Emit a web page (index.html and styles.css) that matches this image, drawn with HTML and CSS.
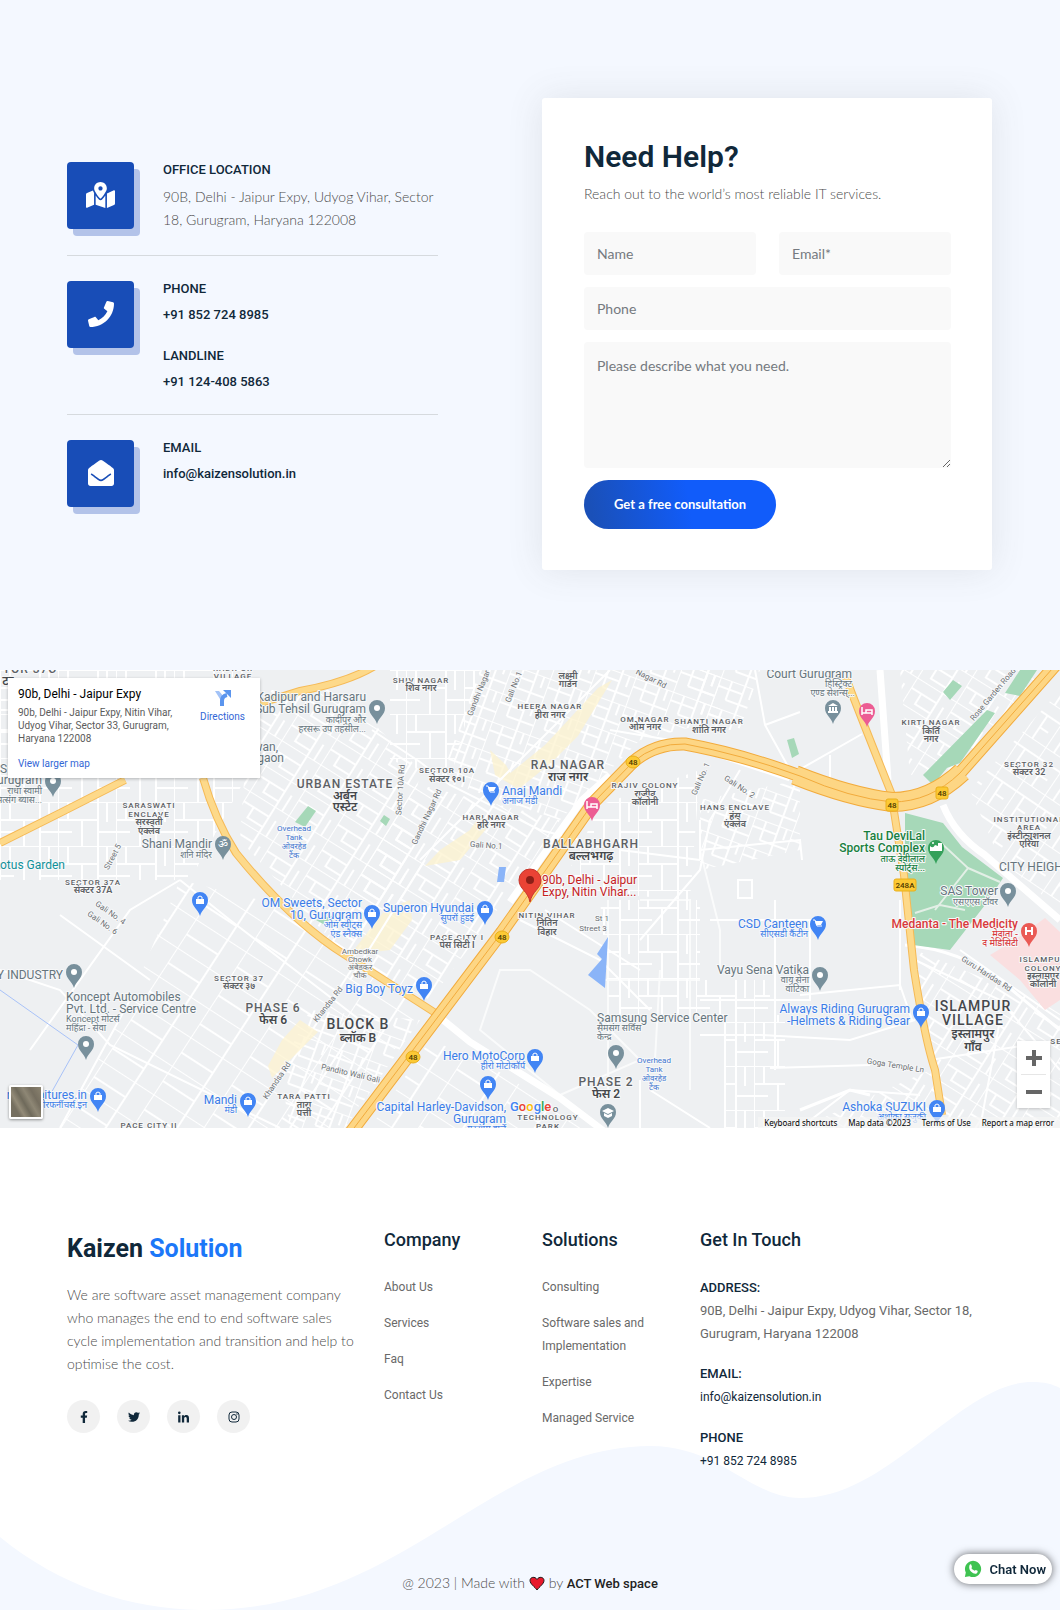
FILE: index.html
```html
<!DOCTYPE html>
<html lang="en">
<head>
<meta charset="utf-8">
<meta name="viewport" content="width=device-width, initial-scale=1">
<title>Kaizen Solution - Contact</title>
<link rel="stylesheet" href="styles.css">
</head>
<body>
<main>
<section class="contact">
  <ul class="info">
    <li class="info-item">
      <span class="tile"><svg viewBox="0 0 576 512" width="29" height="26" aria-hidden="true"><path d="M288 0c-69.59 0-126 56.41-126 126 0 56.26 82.35 158.8 113.9 196.02 6.39 7.54 17.82 7.54 24.2 0C331.65 284.8 414 182.26 414 126 414 56.41 357.59 0 288 0zm0 168c-23.2 0-42-18.8-42-42s18.8-42 42-42 42 18.8 42 42-18.8 42-42 42zM20.12 215.95A32.006 32.006 0 0 0 0 245.66v250.32c0 11.32 11.43 19.06 21.94 14.86L160 448V214.92c-8.84-15.98-16.07-31.54-21.25-46.42L20.12 215.95zM288 359.67c-14.07 0-27.38-6.18-36.51-16.96-19.66-23.2-40.57-49.62-59.49-76.72v182l192 64V266c-18.92 27.09-39.82 53.52-59.49 76.72-9.13 10.77-22.44 16.95-36.51 16.95zm266.06-198.51L416 224v288l139.88-55.95A31.996 31.996 0 0 0 576 426.34V176.02c0-11.32-11.43-19.06-21.94-14.86z"/></svg></span>
      <div class="info-body">
        <div><h3>OFFICE LOCATION</h3><p>90B, Delhi - Jaipur Expy, Udyog Vihar, Sector 18, Gurugram, Haryana 122008</p></div>
      </div>
    </li>
    <li class="info-item">
      <span class="tile"><svg viewBox="0 0 512 512" width="26" height="26" aria-hidden="true"><path d="M493.4 24.6l-104-24c-11.3-2.6-22.9 3.3-27.5 13.9l-48 112c-4.2 9.8-1.4 21.3 6.9 28l60.6 49.6c-36 76.7-98.9 140.5-177.2 177.2l-49.6-60.6c-6.8-8.3-18.2-11.1-28-6.9l-112 48C3.9 366.5-2 378.1.6 389.4l24 104C27.1 504.2 36.7 512 48 512c256.1 0 464-207.5 464-464 0-11.2-7.7-20.9-18.6-23.4z"/></svg></span>
      <div class="info-body">
        <div><h3>PHONE</h3><a href="tel:+918527248985">+91 852 724 8985</a></div>
        <div><h3>LANDLINE</h3><a href="tel:+911244085863">+91 124-408 5863</a></div>
      </div>
    </li>
    <li class="info-item">
      <span class="tile"><svg viewBox="0 0 512 512" width="26" height="26" aria-hidden="true"><path d="M512 464c0 26.51-21.49 48-48 48H48c-26.51 0-48-21.49-48-48V200.724a48 48 0 0 1 18.387-37.776c24.913-19.529 45.501-35.365 164.2-121.511C199.412 29.17 232.797-.347 256 .003c23.198-.354 56.596 29.172 73.413 41.433 118.687 86.137 139.303 101.995 164.2 121.512A48 48 0 0 1 512 200.724V464zm-65.666-196.605c-2.563-3.728-7.7-4.595-11.339-1.907-22.845 16.873-55.462 40.705-105.582 77.079-16.825 12.266-50.21 41.781-73.413 41.43-23.211.344-56.559-29.143-73.413-41.43-50.114-36.37-82.734-60.204-105.582-77.079-3.639-2.688-8.776-1.821-11.339 1.907l-9.072 13.196a7.998 7.998 0 0 0 1.839 10.967c22.887 16.899 55.454 40.69 105.303 76.868 20.274 14.781 56.524 47.813 92.264 47.573 35.724.242 71.961-32.771 92.263-47.573 49.85-36.179 82.418-59.97 105.303-76.868a7.998 7.998 0 0 0 1.839-10.967l-9.071-13.196z"/></svg></span>
      <div class="info-body">
        <div><h3>EMAIL</h3><a href="mailto:info@kaizensolution.in">info@kaizensolution.in</a></div>
      </div>
    </li>
  </ul>
  <form class="help">
    <h2>Need Help?</h2>
    <p>Reach out to the world’s most reliable IT services.</p>
    <div class="fields">
      <input type="text" placeholder="Name" aria-label="Name">
      <input type="email" placeholder="Email*" aria-label="Email">
      <input class="wide" type="tel" placeholder="Phone" aria-label="Phone">
      <textarea class="wide" placeholder="Please describe what you need." aria-label="Message"></textarea>
    </div>
    <button class="submit" type="submit">Get a free consultation</button>
  </form>
</section>

<section class="map" aria-label="Map">
<svg class="map-art" viewBox="0 0 1060 458" preserveAspectRatio="xMidYMid slice">
  <defs>
    <pattern id="grid-a" width="46" height="30" patternUnits="userSpaceOnUse" patternTransform="rotate(32)"><path class="st" d="M0 0H46M0 12H30M0 0V30M30 0V30M38 12V30M12 12V24H30"/></pattern>
    <pattern id="grid-b" width="58" height="44" patternUnits="userSpaceOnUse"><path class="st" d="M0 0H58M0 0V44M10 0V18M0 18H40M24 18V44M40 0V44M40 30H58M49 0V20M0 30H14"/></pattern>
    <pattern id="grid-c" width="40" height="26" patternUnits="userSpaceOnUse" patternTransform="rotate(-56)"><path class="st" d="M0 0H40M0 10H28M0 0V26M28 0V26M14 10V20"/></pattern>
    <pattern id="grid-d" width="60" height="34" patternUnits="userSpaceOnUse" patternTransform="rotate(33)"><path class="st" d="M0 0H60M0 0V34M38 0V34M0 18H38"/></pattern>
    <pattern id="grid-e" width="40" height="30" patternUnits="userSpaceOnUse" patternTransform="rotate(20)"><path class="st" d="M0 0H40M0 9H26M12 0V20M0 0V30M26 0V30M12 20H40M34 0V12"/></pattern>
    <path id="pin" d="M0 16C-2 9-8 7-8 0A8 8 0 1 1 8 0C8 7 2 9 0 16Z"/>
    <g id="dot"><use href="#pin"/><circle r="3" fill="#fff"/></g>
    <g id="bag"><use href="#pin"/><path fill="#fff" d="M-4-1H4V4H-4Z"/><path fill="none" stroke="#fff" d="M-2-1V-3Q0-5 2-3V-1"/></g>
    <g id="cart"><use href="#pin"/><path fill="#fff" d="M-3-3H5L3 1H-2Z"/><path fill="none" stroke="#fff" d="M-5-4H-3L-1 2H4"/></g>
    <g id="bed"><use href="#pin"/><path fill="none" stroke="#fff" stroke-width="1.500" d="M-5-4V4M-5 2H5V-1H-1V2M5 0V4"/></g>
  </defs>
  <rect width="1060" height="458" fill="#eef0f2"/>
  <g>
    <path fill="url(#grid-b)" d="M0 0H250V100L190 210H0Z"/>
    <path fill="url(#grid-a)" d="M250 20L340 20L420 100L400 240L340 280L240 170Z"/>
    <path fill="url(#grid-b)" d="M390 0H480L450 110L390 90Z"/>
    <path fill="url(#grid-e)" d="M480 0H720V50L640 70L560 150L440 110Z"/>
    <path fill="url(#grid-a)" d="M400 110L560 150L520 210L430 330L330 280Z"/>
    <path fill="url(#grid-b)" d="M600 135L700 100L690 230L560 220Z"/>
    <path fill="url(#grid-d)" d="M180 210L300 240L420 340L345 458H60L130 330Z"/>
    <path fill="url(#grid-e)" d="M700 130L800 110L800 180L700 200Z"/>
    <path fill="url(#grid-a)" d="M900 0H1060V0L960 100L910 105Z"/>
    <path fill="url(#grid-c)" d="M1060 20V240L1000 190L970 120Z"/>
    <path fill="url(#grid-e)" d="M310 340L420 350L345 458H290L280 400Z"/>
    <path fill="url(#grid-a)" d="M915 280L1060 340V458H800L930 400Z"/>
    <path fill="url(#grid-b)" d="M600 230H700V310H770V345H610Z"/>
    <path fill="url(#grid-b)" d="M725 345H785V458H725Z"/>
    <path fill="url(#grid-d)" d="M430 370L480 390L590 458H370Z"/>
    <path fill="url(#grid-e)" d="M700 0H760L740 60H700Z"/>
  </g>
  <g fill="#fdf3cf" opacity=".75">
    <path d="M598 18L612 10L578 66L552 92L520 118L508 105L545 75Z"/>
    <path d="M490 80L506 95L520 120L495 105ZM440 180L470 160L480 145L492 152L460 190L425 196ZM385 240L410 230L412 250L390 280L350 285Z"/>
    <path d="M282 370L300 350L318 362L300 380L272 408L268 396Z"/>
  </g>
  <g class="mid">
    <path d="M372 60L420 92L450 115L540 160L580 170M420 190L560 50L610 0M455 90L490 0M350 310L425 190M610 60L700 75M640 270L700 200L710 150L740 100M700 180L800 170L802 190"/>
    <path d="M700 190L620 180M120 110V40H0M0 60H140M30 380L130 240L180 210M0 300L60 320L110 375L280 458M130 330L60 458M180 210L230 250L360 350L290 458M60 245L150 310"/>
    <path d="M790 105L862 64M755 0L765 55L790 100M765 55L800 42M830 108V85M700 150V190M745 210H752V228H738V210Z"/>
    <path d="M710 250H810V330H700M800 325L900 315L912 350M700 365H760L850 370L915 350M700 345H725V458M900 230V320M775 230V400M770 398L870 395M800 458L850 420L920 425"/>
    <path d="M600 310H700M608 230V430M700 180L720 260V300M640 230H690V420M660 300L655 390M500 300L530 300L590 340L640 390L560 425L480 360Z" opacity=".7"/>
    <path d="M520 250L600 290L650 340M545 240L640 300M650 420L710 458M640 410V458M915 290L1000 330L1060 400M930 390L1060 370M960 280L1060 350M980 458L1000 350"/>
  </g>
  <path class="big" d="M437 345L470 372L560 428L605 462M943 135Q955 165 985 185L1060 250M880 0L888 110M700 78L790 108M510 232L582 130L610 105"/>
  <path class="big thin" d="M905 275Q960 280 1000 310L1060 360M800 440L850 420L870 425"/>
  <g fill="#a6d8b8">
    <path d="M905 143L943 153L962 177L1003 208L985 235L950 280L913 275L905 215Z"/>
    <path d="M923 105L987 40L995 43L960 93L947 98L933 115ZM1005 23L1020 0H1037L1020 26ZM943 22L953 10L962 16L950 30ZM295 152L308 136L316 141L305 157ZM380 151L384 145L390 149L386 156ZM787 70L794 68L799 84L792 88ZM316 250L335 245L330 258Z"/>
  </g>
  <path fill="none" stroke="#e3efe6" stroke-width="2" d="M940 172L968 198L935 240M968 198L1000 212M915 243L940 235L965 240"/>
  <path fill="#fadfe0" d="M990 285L1015 270L1045 248L1060 262V330L1045 340L1020 310Z"/>
  <g fill="#8ab4f8"><path d="M608 267L597 284L602 289L588 305L605 318ZM499 197H506L504 212H497Z"/><path d="M0 320L78 375L50 425" fill="none" stroke="#a8c2f8"/></g>
  <g class="hw-case"><path d="M0 173L60 143L125 110M203 108Q215 150 236 183Q290 250 345 285L437 344M258 34L300 21Q350 12 378-6M846 8Q860 45 892 125M893 135L904 205L914 300Q925 370 935 400L942 445"/></g>
  <g class="hw-fill"><path d="M0 173L60 143L125 110M203 108Q215 150 236 183Q290 250 345 285L437 344M258 34L300 21Q350 12 378-6M846 8Q860 45 892 125M893 135L904 205L914 300Q925 370 935 400L942 445"/></g>
  <path class="nh-case" d="M345 470L502 262L593 133L633 92Q655 73 685 74Q740 84 800 106Q850 128 892 132Q930 132 960 103L1060-10"/>
  <path class="nh-case wide-nh" d="M795 105Q850 127 892 132Q930 132 962 102"/>
  <path class="nh-fill wide-nh" d="M795 105Q850 127 892 132Q930 132 962 102"/>
  <path class="nh-fill" d="M345 470L502 262L593 133L633 92Q655 73 685 74Q740 84 800 106Q850 128 892 132Q930 132 960 103L1060-10"/>
  <path class="nh-mid" d="M345 470L502 262L593 133L633 92Q655 73 685 74Q740 84 800 106Q850 128 892 132Q930 132 960 103L1060-10"/>

  <g class="shield"><ellipse cx="633" cy="92" rx="7" ry="6"/><ellipse cx="502" cy="267" rx="7" ry="6"/><ellipse cx="413" cy="387" rx="7" ry="6"/><rect x="886" y="129" width="12" height="12" rx="2"/><rect x="936" y="117" width="12" height="12" rx="2"/><rect x="894" y="209" width="22" height="12" rx="2"/></g>
  <g class="shield-no"><text x="633" y="95">48</text><text x="502" y="270">48</text><text x="413" y="390">48</text><text x="892" y="138">48</text><text x="942" y="126">48</text><text x="905" y="218">248A</text></g>

  <g class="area">
    <text x="30" y="3" class="l">TOR 37C</text><text x="8" y="15" class="hl">टर</text>
    <text x="233" y="1">KADIPUR</text><text x="233" y="9">VILLAGE</text>
    <text x="149" y="138">SARASWATI</text><text x="149" y="147">ENCLAVE</text><text class="h" x="149" y="155">सरस्वती</text><text class="h" x="149" y="164">एंक्लेव</text>
    <text x="93" y="215">SECTOR 37A</text><text class="h" x="93" y="223">सेक्टर 37A</text>
    <text class="l" x="345" y="118">URBAN ESTATE</text><text class="hl" x="345" y="130">अर्बन</text><text class="hl" x="345" y="141">एस्टेट</text>
    <text x="421" y="13">SHIV NAGAR</text><text class="h" x="421" y="21">शिव नगर</text>
    <text class="h" x="568" y="9">लक्ष्मी</text><text class="h" x="568" y="17">गार्डन</text>
    <text x="550" y="39">HEERA NAGAR</text><text class="h" x="550" y="48">हीरा नगर</text>
    <text x="645" y="52">OM NAGAR</text><text class="h" x="645" y="60">ओम नगर</text>
    <text x="709" y="54">SHANTI NAGAR</text><text class="h" x="709" y="63">शांति नगर</text>
    <text class="l" x="568" y="99">RAJ NAGAR</text><text class="hl" x="568" y="111">राज नगर</text>
    <text x="447" y="103">SECTOR 10A</text><text class="h" x="447" y="112">सेक्टर १०।</text>
    <text x="491" y="150">HARI NAGAR</text><text class="h" x="491" y="158">हरि नगर</text>
    <text x="645" y="118">RAJIV COLONY</text><text class="h" x="645" y="127">राजीव</text><text class="h" x="645" y="135">कॉलोनी</text>
    <text class="l" x="591" y="178">BALLABHGARH</text><text class="hl" x="591" y="190">बल्लभगढ़</text>
    <text x="931" y="55">KIRTI NAGAR</text><text class="h" x="931" y="64">किर्ति</text><text class="h" x="931" y="72">नगर</text>
    <text x="1029" y="97">SECTOR 32</text><text class="h" x="1029" y="105">सेक्टर 32</text>
    <text x="735" y="140">HANS ENCLAVE</text><text class="h" x="735" y="149">हंस</text><text class="h" x="735" y="157">एंक्लेव</text>
    <text x="1029" y="152">INSTITUTIONAL</text><text x="1029" y="160">AREA</text><text class="h" x="1029" y="169">इंस्टीट्यूशनल</text><text class="h" x="1029" y="177">एरिया</text>
    <text x="239" y="311">SECTOR 37</text><text class="h" x="239" y="319">सेक्टर ३७</text>
    <text class="l" x="273" y="342">PHASE 6</text><text class="hl" x="273" y="354">फेस 6</text>
    <text class="xl" x="358" y="359">BLOCK B</text><text class="hl" x="358" y="372">ब्लॉक B</text>
    <text x="304" y="429">TARA PATTI</text><text class="h" x="304" y="438">तारा</text><text class="h" x="304" y="446">पत्ती</text>
    <text x="149" y="458">PACE CITY II</text>
    <text x="547" y="248">NITIN VIHAR</text><text class="h" x="547" y="256">नितिन</text><text class="h" x="547" y="265">विहार</text>
    <text x="457" y="270">PACE CITY I</text><text class="h" x="457" y="278">पेस सिटी I</text>
    <text class="l" x="606" y="416">PHASE 2</text><text class="hl" x="606" y="428">फेस 2</text>
    <text x="556" y="442">O</text><text x="548" y="450">TECHNOLOGY</text><text x="548" y="459">PARK</text>
    <text x="1043" y="292">ISLAMPUR</text><text x="1043" y="301">COLONY</text><text class="h" x="1043" y="309">इस्लामपुर</text><text class="h" x="1043" y="317">कॉलोनी</text>
    <text class="xl" x="973" y="341">ISLAMPUR</text><text class="xl" x="973" y="355">VILLAGE</text><text class="hl" x="973" y="368">इस्लामपुर</text><text class="hl" x="973" y="381">गाँव</text>
    <text x="1056" y="374">SE</text>
  </g>

  <g class="street">
    <text transform="translate(115 188) rotate(-62)">Street 5</text><text transform="translate(481 24) rotate(-68)">Gandhi Nagar</text><text transform="translate(516 18) rotate(-68)">Gali No.1</text><text transform="translate(650 11) rotate(27)">Nagar Rd</text><text transform="translate(403 120) rotate(-86)">Sector 10A Rd</text><text transform="translate(429 148) rotate(-65)">Gandhi Nagar Rd</text><text transform="translate(703 110) rotate(-66)">Gali No. 1</text><text transform="translate(486 178) rotate(4)">Gali No.1</text><text transform="translate(995 26) rotate(-50)">Rose Garden Road</text><text transform="translate(738 119) rotate(33)">Gali No. 2</text><text transform="translate(109 245) rotate(35)">Gali No. 4</text><text transform="translate(101 255) rotate(35)">Gali No. 6</text><text transform="translate(330 336) rotate(-52)">Khandsa Rd</text><text transform="translate(279 412) rotate(-56)">Khandsa Rd</text><text transform="translate(350 406) rotate(13)">Pandito Wali Gali</text><text x="602" y="251">St 1</text><text x="593" y="261">Street 3</text><text x="360" y="284">Ambedkar</text><text x="360" y="292">Chowk</text><text x="360" y="300">अंबेडकर</text><text x="360" y="308">चौक</text><text transform="translate(985 306) rotate(33)">Guru Haridas Rd</text><text transform="translate(895 398) rotate(9)">Goga Temple Ln</text>
  </g>

  <g class="poi gray end">
    <text x="366" y="31">Kadipur and Harsaru</text><text x="366" y="43">Sub Tehsil Gurugram</text><text class="s" x="366" y="53">कादीपुर और</text><text class="s" x="366" y="62">हरसरू उप तहसील...</text>
    <text x="278" y="81">wan,</text><text x="284" y="92">rgaon</text>
    <text x="7" y="103">S</text><text x="42" y="114">Gurugram</text><text class="s" x="42" y="124">राधा स्वामी</text><text class="s" x="42" y="133">सत्संग ब्यास...</text>
    <text x="212" y="178">Shani Mandir</text><text class="s" x="212" y="188">शनि मंदिर</text>
    <text x="852" y="8">Court Gurugram</text><text class="s" x="852" y="17">डिस्ट्रिक्ट</text><text class="s" x="855" y="26">एण्ड सेशन्स्...</text>
    <text x="998" y="225">SAS Tower</text><text class="s" x="998" y="235">एसएएस टॉवर</text>
    <text x="63" y="309">Y INDUSTRY</text><text x="809" y="304">Vayu Sena Vatika</text><text class="s" x="809" y="313">वायु सेना</text><text class="s" x="809" y="322">वाटिका</text>
  </g>
  <g class="poi gray">
    <text x="999" y="201">CITY HEIGHTS</text>
    <text x="66" y="331">Koncept Automobiles</text><text x="66" y="343">Pvt. Ltd. - Service Centre</text><text class="s" x="66" y="352">Koncept मोटर्स</text><text class="s" x="66" y="361">महिंद्रा - सेवा</text>
    <text x="597" y="352">Samsung Service Center</text><text class="s" x="597" y="361">सैमसंग सर्विस</text><text class="s" x="597" y="370">केन्द्र</text>
  </g>
  <g class="poi teal end"><text x="65" y="199">Lotus Garden</text></g>
  <g class="poi green end"><text x="925" y="170">Tau DeviLal</text><text x="925" y="182">Sports Complex</text><text class="s" x="925" y="192">ताऊ देवीलाल</text><text class="s" x="925" y="201">स्पोर्ट्स...</text></g>
  <g class="poi red end"><text x="1018" y="258">Medanta - The Medicity</text><text class="s" x="1018" y="267">मेदांता -</text><text class="s" x="1018" y="276">द मेडिसिटी</text></g>
  <g class="poi blue end">
    <text x="362" y="237">OM Sweets, Sector</text><text x="362" y="249">10, Gurugram</text><text class="s" x="362" y="258">ओम स्वीट्स</text><text class="s" x="362" y="267">एंड स्नैक्स</text>
    <text x="474" y="242">Superon Hyundai</text><text class="s" x="474" y="251">सुपरों हुंडई</text>
    <text x="413" y="323">Big Boy Toyz</text><text x="525" y="390">Hero MotoCorp</text><text class="s" x="525" y="399">हीरो मोटोकॉर्प</text>
    <text x="506" y="441">Capital Harley-Davidson,</text><text x="506" y="453">Gurugram</text><text class="s" x="506" y="462">गुरुग्राम हार्ले</text>
    <text x="87" y="429">rd Furnitures.in</text><text class="s" x="87" y="438">फोरफर्नीचर्स.इन</text>
    <text x="237" y="434">Mandi</text><text class="s" x="237" y="443">मंडी</text>
    <text x="808" y="258">CSD Canteen</text><text class="s" x="808" y="267">सीएसडी कैंटीन</text>
    <text x="910" y="343">Always Riding Gurugram</text><text x="910" y="355">-Helmets &amp; Riding Gear</text>
    <text x="926" y="441">Ashoka SUZUKI</text><text class="s" x="926" y="450">अशोका सुजुकी</text>
  </g>
  <g class="poi blue"><text x="502" y="125">Anaj Mandi</text><text class="s" x="502" y="134">अनाज मंडी</text></g>
  <g class="tank"><text x="294" y="161">Overhead</text><text x="294" y="170">Tank</text><text x="294" y="179">ओवरहेड</text><text x="294" y="188">टैंक</text><text x="654" y="393">Overhead</text><text x="654" y="402">Tank</text><text x="654" y="411">ओवरहेड</text><text x="654" y="420">टैंक</text></g>
  <g class="poi place"><text x="542" y="214">90b, Delhi - Jaipur</text><text x="542" y="226">Expy, Nitin Vihar...</text></g>

  <g fill="#78909c"><use href="#dot" x="377" y="38"/><use href="#dot" x="53" y="111"/><use href="#dot" x="1008" y="221"/><use href="#dot" x="74" y="302"/><use href="#dot" x="86" y="374"/><use href="#dot" x="616" y="383"/><use href="#dot" x="820" y="305"/>
    <use href="#pin" x="223" y="174"/><use href="#pin" x="833" y="38"/><use href="#pin" x="608" y="442"/></g>
  <text class="om" x="223" y="178">ॐ</text>
  <path fill="#fff" d="M828 36L833 33L838 36ZM829 37H831V41H829ZM832 37H834V41H832ZM835 37H837V41H835ZM828 41H838V43H828ZM602 441L608 438L614 441L608 444ZM604 443L608 445L612 443V446L608 448L604 446Z"/>
  <g fill="#4285f4"><use href="#bag" x="200" y="230"/><use href="#bag" x="98" y="426"/><use href="#bag" x="248" y="431"/><use href="#bag" x="372" y="243"/><use href="#bag" x="485" y="239"/><use href="#bag" x="424" y="315"/><use href="#bag" x="535" y="387"/><use href="#bag" x="488" y="414"/><use href="#bag" x="921" y="342"/><use href="#bag" x="937" y="438"/><use href="#cart" x="491" y="120"/><use href="#cart" x="818" y="254"/></g>
  <g fill="#ec5c93"><use href="#bed" x="592" y="135"/><use href="#bed" x="867" y="41"/></g>
  <use href="#pin" x="936" y="178" fill="#34a05a"/><path fill="#fff" d="M930 176Q933 179 935 175L938 176V173H942V181H930ZM932 173A1 1 0 1 1 934 173A1 1 0 1 1 932 173Z"/>
  <use href="#pin" x="1029" y="261" fill="#ea5a55"/><path fill="none" stroke="#fff" stroke-width="2" d="M1026 257V265M1032 257V265M1026 261H1032"/>
  <path fill="#ea4335" stroke="#c5352b" d="M530 232C528 221 519 219 519 210A11 11 0 1 1 541 210C541 219 532 221 530 232Z"/><circle cx="530" cy="210" r="4" fill="#8c1f17"/>
  <text class="google" x="510" y="441"><tspan fill="#4285f4">G</tspan><tspan fill="#ea4335">o</tspan><tspan fill="#fbbc04">o</tspan><tspan fill="#4285f4">g</tspan><tspan fill="#34a853">l</tspan><tspan fill="#ea4335">e</tspan></text>
</svg>
  <div class="place-card">
    <div class="place-text">
      <h3>90b, Delhi - Jaipur Expy</h3>
      <p>90b, Delhi - Jaipur Expy, Nitin Vihar, Udyog Vihar, Sector 33, Gurugram, Haryana 122008</p>
      <a href="#map">View larger map</a>
    </div>
    <a class="directions" href="#directions"><svg viewBox="0 0 16 16" width="16" height="16" aria-hidden="true"><path fill="#a3c3f7" d="M0 1H4L9 7V16H5V9Z"/><path fill="none" stroke="#5b95ee" stroke-width="4" d="M7 16V11Q7 6 12 5"/><path fill="#5b95ee" d="M8 0H16V8Z"/></svg>Directions</a>
  </div>
  <button class="satellite" type="button" aria-label="Show satellite imagery"></button>
  <div class="zoom"><button type="button" aria-label="Zoom in"><svg viewBox="0 0 16 16" width="16" height="16"><path d="M6 0H10V6H16V10H10V16H6V10H0V6H6Z"/></svg></button><button type="button" aria-label="Zoom out"><svg viewBox="0 0 16 16" width="16" height="16"><path d="M0 6H16V10H0Z"/></svg></button></div>
  <div class="legal"><button type="button">Keyboard shortcuts</button><span>Map data ©2023</span><a href="#terms">Terms of Use</a><a href="#report">Report a map error</a></div>
</section>
</main>

<footer class="footer">
  <svg class="wave" viewBox="0 0 1060 230" preserveAspectRatio="none" aria-hidden="true"><path fill="#f4f8ff" d="M0 156C60 205 130 228 200 229C400 232 490 66 650 65C720 65 750 117 800 117C890 117 960 1 1032 1C1045 1 1052 3 1060 7V230H0Z"/></svg>
  <div class="columns">
    <div class="about">
      <a class="logo" href="#home">Kaizen <span>Solution</span></a>
      <p>We are software asset management company who manages the end to end software sales cycle implementation and transition and help to optimise the cost.</p>
      <div class="social">
        <a href="#facebook" aria-label="Facebook"><svg viewBox="0 0 320 512" width="12" height="12"><path d="M279.14 288l14.22-92.66h-88.91v-60.13c0-25.35 12.42-50.06 52.24-50.06h40.42V6.26S260.43 0 225.36 0c-73.22 0-121.08 44.38-121.08 124.72v70.62H22.89V288h81.39v224h100.17V288z"/></svg></a>
        <a href="#twitter" aria-label="Twitter"><svg viewBox="0 0 512 512" width="12" height="12"><path d="M459.37 151.716c.325 4.548.325 9.097.325 13.645 0 138.72-105.583 298.558-298.558 298.558-59.452 0-114.68-17.219-161.137-47.106 8.447.974 16.568 1.299 25.34 1.299 49.055 0 94.213-16.568 130.274-44.832-46.132-.975-84.792-31.188-98.112-72.772 6.498.974 12.995 1.624 19.818 1.624 9.421 0 18.843-1.3 27.614-3.573-48.081-9.747-84.143-51.98-84.143-102.985v-1.299c13.969 7.797 30.214 12.67 47.431 13.319-28.264-18.843-46.781-51.005-46.781-87.391 0-19.492 5.197-37.36 14.294-52.954 51.655 63.675 129.3 105.258 216.365 109.807-1.624-7.797-2.599-15.918-2.599-24.04 0-57.828 46.782-104.934 104.934-104.934 30.213 0 57.502 12.67 76.67 33.137 23.715-4.548 46.456-13.32 66.599-25.34-7.798 24.366-24.366 44.833-46.132 57.827 21.117-2.273 41.584-8.122 60.426-16.243-14.292 20.791-32.161 39.308-52.628 54.253z"/></svg></a>
        <a href="#linkedin" aria-label="LinkedIn"><svg viewBox="0 0 448 448" width="11" height="12"><path d="M100.28 448H7.4V148.9h92.88zM53.79 108.1C24.09 108.1 0 83.5 0 53.8a53.79 53.79 0 0 1 107.58 0c0 29.7-24.1 54.3-53.79 54.3zM447.9 448h-92.68V302.4c0-34.7-.7-79.2-48.29-79.2-48.29 0-55.69 37.7-55.69 76.7V448h-92.78V148.9h89.08v40.8h1.3c12.4-23.5 42.69-48.3 87.88-48.3 94 0 111.28 61.9 111.28 142.3V448z"/></svg></a>
        <a href="#instagram" aria-label="Instagram"><svg viewBox="0 0 24 24" width="12" height="12"><rect x="2" y="2" width="20" height="20" rx="6" fill="none" stroke="#10283a" stroke-width="2"/><circle cx="12" cy="12" r="5" fill="none" stroke="#10283a" stroke-width="2"/><circle cx="18" cy="6" r="1.500"/></svg></a>
      </div>
    </div>
    <nav class="links" aria-label="Company">
      <h4>Company</h4>
      <ul><li><a href="#about">About Us</a></li><li><a href="#services">Services</a></li><li><a href="#faq">Faq</a></li><li><a href="#contact">Contact Us</a></li></ul>
    </nav>
    <nav class="links" aria-label="Solutions">
      <h4>Solutions</h4>
      <ul><li><a href="#consulting">Consulting</a></li><li><a href="#software">Software sales and Implementation</a></li><li><a href="#expertise">Expertise</a></li><li><a href="#managed">Managed Service</a></li></ul>
    </nav>
    <address class="touch">
      <h4>Get In Touch</h4>
      <div><h5>ADDRESS:</h5><p>90B, Delhi - Jaipur Expy, Udyog Vihar, Sector 18, Gurugram, Haryana 122008</p></div>
      <div><h5>EMAIL:</h5><a href="mailto:info@kaizensolution.in">info@kaizensolution.in</a></div>
      <div><h5>PHONE</h5><a href="tel:+918527248985">+91 852 724 8985</a></div>
    </address>
  </div>
  <p class="credit">@ 2023 | Made with <svg viewBox="0 0 16 15" width="16" height="15" role="img" aria-label="love"><path fill="#e8192c" stroke="#1a1a1a" d="M8 14C6 11 1 8 1 4.500C1 1 6 0 8 3.500C10 0 15 1 15 4.500C15 8 10 11 8 14Z"/></svg> by <a href="#act">ACT Web space</a></p>
</footer>
<a class="chat" href="#chat"><svg viewBox="0 0 20 20" width="18" height="18" aria-hidden="true"><path fill="#3fc351" d="M1 19L2 14A9 9 0 1 1 6 18Z"/><path fill="#fff" d="M6 6Q7 4 8 5L9 8L8 9Q9 11 12 12L13 11L15 12Q16 13 14 15Q11 16 8 13Q5 10 6 6Z"/></svg>Chat Now</a>
</body>
</html>
```
FILE: styles.css
```css
* { box-sizing: border-box; }
body { margin: 0; background: #fff; color: #696969; font-family: Roboto, sans-serif; font-size: 14px; line-height: 23px; }
h2, h3, h4, h5, p, ul { margin: 0; padding: 0; }
ul { list-style: none; }
a { color: #10283a; text-decoration: none; }
button { font: inherit; border: 0; padding: 0; cursor: pointer; }

.contact { display: grid; grid-template-columns: 371fr 450fr; column-gap: 104px; align-items: center; padding: 98px 68px 100px 67px; background: #f4f8ff; }
.info-item { display: flex; gap: 29px; padding: 25px 0 24px; border-bottom: 1px solid #d6dade; }
.info-item:first-child { padding-top: 0; }
.info-item:last-child { padding-bottom: 0; border: 0; }
.tile { flex: none; display: flex; align-items: center; justify-content: center; width: 67px; height: 67px; border-radius: 4px; background: #184db7; box-shadow: 6px 7px 0 #b3c3e9; }
.tile svg { fill: #fff; }
.info-body { display: grid; gap: 25px; align-content: start; }
.info h3 { margin-bottom: 7px; color: #10283a; font-size: 13px; font-weight: 500; line-height: 16px; }
.info p, .help, .about p, .credit { font-family: Lato, sans-serif; font-weight: 300; color: #4c4c4c; }
.info a { display: block; padding-top: 3px; font-size: 13px; font-weight: 500; line-height: 16px; }

.help { padding: 42px 41px 41px 42px; background: #fff; border-radius: 3px; box-shadow: 0 0 36px rgba(80, 80, 80, .12); }
.help h2 { color: #10283a; font: 600 30px/34px Roboto, sans-serif; }
.help p { margin: 8px 0 27px; }
.fields { display: grid; grid-template-columns: 1fr 1fr; gap: 12px 23px; margin-bottom: 12px; }
.fields input, .fields textarea { width: 100%; height: 43px; padding: 0 13px; border: 0; border-radius: 4px; background: #f9f9f9; color: #333; font: 14px/23px Lato, sans-serif; }
.fields textarea { display: block; height: 126px; padding: 12px 13px; resize: vertical; }
.fields .wide { grid-column: 1 / -1; }
.fields ::placeholder { color: #757a80; opacity: 1; }
.submit { height: 49px; padding: 0 30px; border-radius: 25px; background: linear-gradient(80deg, #1a50b8 5%, #115cfa 55%); color: #fff; font-size: 13px; font-weight: 700; }

.map { position: relative; height: 458px; overflow: hidden; }
.map-art { display: block; width: 100%; height: 100%; font-family: Roboto, "Noto Sans", sans-serif; }
.map-art text { paint-order: stroke; stroke: #f7f8f9; stroke-width: 2px; stroke-linejoin: round; }
.st { fill: none; stroke: #fff; stroke-width: 2px; }
.mid { fill: none; stroke: #fff; stroke-width: 2px; }
.big { fill: none; stroke: #fff; stroke-width: 7px; }
.thin { stroke-width: 3px; }
.hw-case { fill: none; stroke: #f5b955; stroke-width: 8px; }
.hw-fill { fill: none; stroke: #fdd98a; stroke-width: 6px; }
.nh-case { fill: none; stroke: #f2ab3c; stroke-width: 13px; }
.nh-fill { fill: none; stroke: #fdd684; stroke-width: 11px; }
.nh-case.wide-nh { stroke-width: 20px; }
.nh-fill.wide-nh { stroke-width: 18px; }
.nh-mid { fill: none; stroke: #f2ab3c; stroke-width: 1px; }
.shield { fill: #fcc934; stroke: #e9b01c; }
.map-art .shield-no text { font-size: 8px; font-weight: 500; text-anchor: middle; fill: #4d3a00; stroke: none; }
.area { font-size: 8px; font-weight: 500; letter-spacing: 1px; text-anchor: middle; fill: #5c6064; }
.area .l { font-size: 12px; }
.area .xl { font-size: 14px; fill: #45484c; }
.area .h { font-size: 9px; font-weight: 600; letter-spacing: 0; }
.area .hl { font-size: 12px; font-weight: 600; letter-spacing: 0; fill: #45484c; }
.street { font-size: 8px; text-anchor: middle; fill: #6c7074; }
.poi { font-size: 12px; }
.poi .s { font-size: 9px; }
.end { text-anchor: end; }
.gray { fill: #66757d; }
.teal { fill: #12919a; }
.green { fill: #18803f; font-weight: 500; }
.red { fill: #d9393b; font-weight: 500; }
.blue { fill: #3b7de8; }
.place { fill: #c5221f; }
.tank { font-size: 8px; text-anchor: middle; fill: #3f76cf; }
.map-art .om { font-size: 11px; text-anchor: middle; fill: #fff; stroke: none; }
.google { font-size: 13px; font-weight: 500; }

.place-card { position: absolute; left: 8px; top: 8px; display: flex; justify-content: space-between; width: 252px; height: 100px; padding: 8px 15px 7px 10px; background: #fff; box-shadow: 0 1px 3px rgba(0, 0, 0, .25); font-size: 10px; line-height: 13px; color: #5b5b5b; }
.place-text { width: 170px; }
.place-card h3 { margin-bottom: 4px; color: #000; font-size: 12px; font-weight: 400; line-height: 16px; }
.place-card p { margin-bottom: 12px; }
.place-card a { color: #3367d6; }
.directions { display: flex; flex-direction: column; align-items: center; gap: 4px; padding-top: 4px; }
.satellite { position: absolute; left: 9px; bottom: 9px; width: 34px; height: 34px; border: 2px solid #fff; border-radius: 2px; background: linear-gradient(60deg, #756f60 20%, #938b78 30%, #6f6a5b 45%, #8e8775 60%, #756e5f 75%, #8b8370); box-shadow: 0 1px 3px rgba(0, 0, 0, .4); }
.zoom { position: absolute; right: 10px; bottom: 20px; display: grid; width: 33px; padding: 0 4px; background: #fff; box-shadow: 0 1px 3px rgba(0, 0, 0, .2); }
.zoom button { display: flex; align-items: center; justify-content: center; height: 33px; background: none; }
.zoom button + button { height: 34px; border-top: 1px solid #e6e6e6; }
.zoom svg { fill: #666; }
.legal { position: absolute; right: 0; bottom: 0; display: flex; gap: 11px; padding: 0 6px; background: rgba(245, 245, 245, .7); font-family: "Noto Sans", sans-serif; font-size: 8px; line-height: 11px; color: #000; }
.legal a, .legal button { background: none; color: #000; }

.footer { position: relative; padding: 100px 67px 16px; }
.wave { position: absolute; left: 0; bottom: 0; width: 100%; height: 230px; }
.columns { position: relative; display: grid; grid-template-columns: 293fr 134fr 134fr 293fr; column-gap: 24px; min-height: 343px; }
.logo { display: block; padding-top: 6px; font-size: 25px; font-weight: 700; line-height: 30px; }
.logo span { color: #1c77f8; }
.about p { margin: 19px 0 25px; }
.social { display: flex; gap: 17px; }
.social a { display: flex; align-items: center; justify-content: center; width: 33px; height: 33px; border-radius: 50%; background: #f1f1f1; }
.social svg { fill: #10283a; }
.footer h4 { margin-bottom: 25px; color: #10283a; font-size: 18px; font-weight: 500; line-height: 23px; }
.links ul { display: grid; gap: 13px; }
.links a { display: block; color: #696969; font-size: 12px; }
.touch { font-style: normal; }
.touch h5 { color: #10283a; font-size: 13px; font-weight: 500; }
.touch p { font-size: 13px; }
.touch div { margin-bottom: 17px; }
.touch a { font-size: 12px; }
.credit { position: relative; text-align: center; }
.credit svg { vertical-align: -3px; }
.credit a { font-family: Roboto, sans-serif; font-size: 13px; font-weight: 500; color: #222; }
.chat { position: fixed; right: 8px; bottom: 26px; display: flex; align-items: center; gap: 8px; height: 30px; padding: 0 6px 0 10px; border-radius: 15px; background: #fff; box-shadow: 0 0 8px rgba(0, 0, 0, .6); font-size: 13px; font-weight: 600; }
```
